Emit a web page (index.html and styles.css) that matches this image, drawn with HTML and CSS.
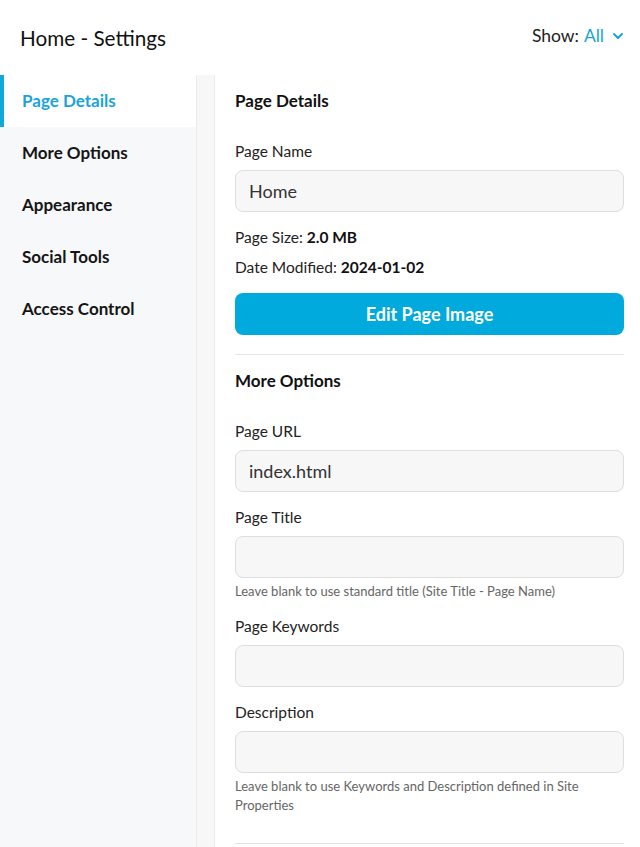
FILE: index.html
```html
<!DOCTYPE html>
<html lang="en">
<head>
  <meta charset="UTF-8">
  <meta name="viewport" content="width=device-width, initial-scale=1.0">
  <title>Home - Settings</title>
  <link rel="stylesheet" href="styles.css">
</head>
<body>
  <header class="topbar">
    <h1>Home - Settings</h1>
    <div class="show-filter">
      Show: <span class="show-value">All</span>
      <svg class="chevron" width="12" height="8" viewBox="0 0 12 8">
        <path d="M2 2l4 4 4-4" fill="none" stroke="currentColor" stroke-width="2" stroke-linecap="round" stroke-linejoin="round"/>
      </svg>
    </div>
  </header>

  <div class="layout">
    <nav class="sidebar">
      <a class="nav-item active">Page Details</a>
      <a class="nav-item">More Options</a>
      <a class="nav-item">Appearance</a>
      <a class="nav-item">Social Tools</a>
      <a class="nav-item">Access Control</a>
    </nav>

    <div class="gutter"></div>

    <main class="content">
      <section class="panel">
        <h2>Page Details</h2>

        <label for="pageName">Page Name</label>
        <input type="text" id="pageName" value="Home">

        <p class="meta">Page Size: <strong>2.0 MB</strong></p>
        <p class="meta">Date Modified: <strong>2024-01-02</strong></p>

        <button type="button">Edit Page Image</button>
      </section>

      <section class="panel">
        <h2>More Options</h2>

        <label for="pageUrl">Page URL</label>
        <input type="text" id="pageUrl" value="index.html">

        <label for="pageTitle">Page Title</label>
        <input type="text" id="pageTitle">
        <p class="hint">Leave blank to use standard title (Site Title - Page Name)</p>

        <label for="pageKeywords">Page Keywords</label>
        <input type="text" id="pageKeywords">

        <label for="pageDescription">Description</label>
        <input type="text" id="pageDescription">
        <p class="hint">Leave blank to use Keywords and Description defined in Site Properties</p>
      </section>
    </main>
  </div>
</body>
</html>
```

FILE: styles.css
```css
body {
  font-family: Lato, 'Open Sans', sans-serif;
  margin: 0;
  padding: 0;
  color: #1a1a1a;
  background-color: #ffffff;
}

.topbar {
  height: 75px;
  display: flex;
  justify-content: space-between;
  align-items: center;
  padding: 0 16px 0 20px;
  box-sizing: border-box;
}

.topbar h1 {
  margin: 0;
  font-size: 20.7px;
  font-weight: 400;
  color: #111;
}

.show-filter {
  font-size: 17.5px;
  color: #222;
  display: flex;
  align-items: center;
  gap: 5px;
  margin-top: -4px;
}

.show-value {
  color: #1aa3dc;
}

.chevron {
  color: #1aa3dc;
  margin-left: 3px;
}

.layout {
  display: flex;
  min-height: calc(100vh - 75px);
}

.sidebar {
  width: 196px;
  background-color: #f7f8fa;
  display: flex;
  flex-direction: column;
}

.nav-item {
  display: block;
  height: 52px;
  line-height: 52px;
  font-size: 17px;
  font-weight: 700;
  color: #151515;
  cursor: pointer;
  border-left: 4px solid transparent;
  padding-left: 18px;
}

.nav-item.active {
  background-color: #ffffff;
  color: #1aa3dc;
  border-left-color: #12a8dc;
}

.gutter {
  width: 17px;
  background-color: #f7f7f7;
  border-left: 1px solid #ebebeb;
  border-right: 1px solid #ebebeb;
}

.content {
  flex: 1;
  padding: 0 16px 0 20px;
}

.panel {
  border-bottom: 1px solid #e4e4e4;
  padding-top: 16px;
  padding-bottom: 19px;
}

.panel + .panel {
  padding-top: 16px;
  padding-bottom: 28px;
}

h2 {
  margin: 0 0 30px;
  font-size: 17px;
  font-weight: 700;
  line-height: 20px;
  color: #111;
}

label {
  display: block;
  font-size: 15.5px;
  line-height: 20px;
  color: #222;
  margin-bottom: 9px;
}

input {
  display: block;
  width: 100%;
  height: 42px;
  padding: 0 13px;
  margin-bottom: 15px;
  box-sizing: border-box;
  border: 1px solid #dedede;
  border-radius: 8px;
  background-color: #f7f7f7;
  font-family: inherit;
  font-size: 18px;
  color: #333;
}

.meta {
  margin: 0 0 10px;
  font-size: 15.5px;
  line-height: 20px;
  color: #222;
}

.meta strong {
  font-weight: 700;
  color: #111;
}

button {
  display: block;
  width: 100%;
  height: 42px;
  margin-top: 16px;
  border: none;
  border-radius: 8px;
  background-color: #00aadd;
  color: #ffffff;
  font-family: inherit;
  font-size: 18px;
  font-weight: 700;
  cursor: pointer;
}

.hint {
  margin: -11px 0 15px;
  font-size: 13px;
  line-height: 19px;
  color: #666;
}

.panel .hint:last-child {
  margin-bottom: 0;
}
```
